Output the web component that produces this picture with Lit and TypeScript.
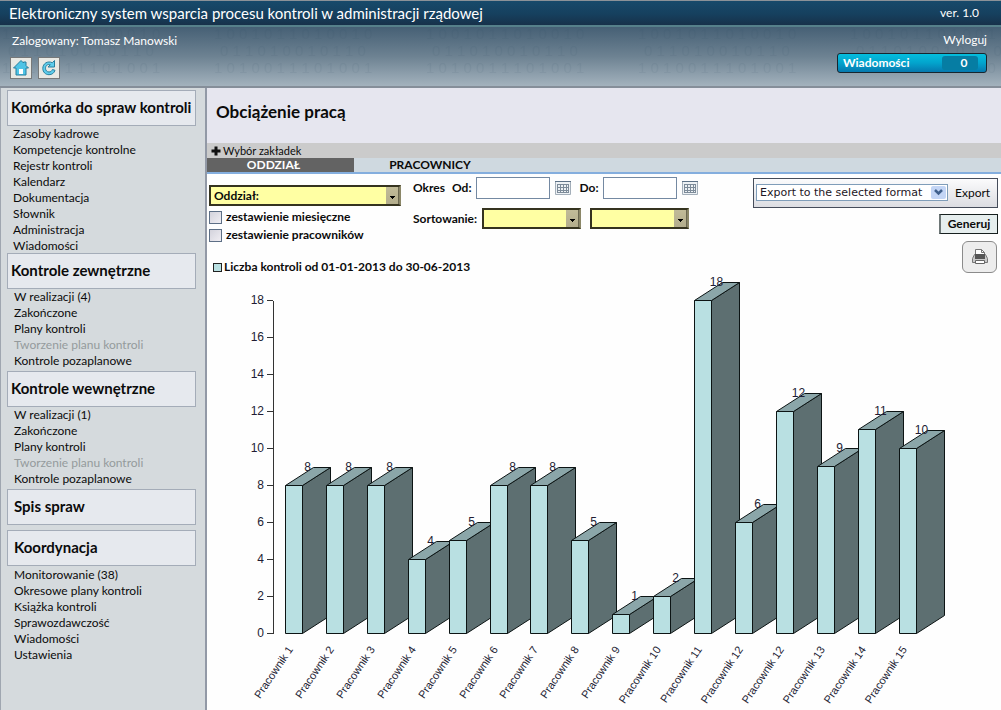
import { LitElement, html, svg, css } from "lit";
import { customElement, property } from "lit/decorators.js";
import { classMap } from "lit/directives/class-map.js";

interface MenuGroup {
  title: string;
  kind: string;
  items: { label: string; off?: boolean }[];
}

const audit = (n: number) => [
  { label: `W realizacji (${n})` },
  { label: "Zakończone" },
  { label: "Plany kontroli" },
  { label: "Tworzenie planu kontroli", off: true },
  { label: "Kontrole pozaplanowe" },
];

const MENU: MenuGroup[] = [
  {
    title: "Komórka do spraw kontroli",
    kind: "first",
    items: [
      "Zasoby kadrowe",
      "Kompetencje kontrolne",
      "Rejestr kontroli",
      "Kalendarz",
      "Dokumentacja",
      "Słownik",
      "Administracja",
      "Wiadomości",
    ].map((label) => ({ label })),
  },
  { title: "Kontrole zewnętrzne", kind: "audit", items: audit(4) },
  { title: "Kontrole wewnętrzne", kind: "audit", items: audit(1) },
  { title: "Spis spraw", kind: "single", items: [] },
  {
    title: "Koordynacja",
    kind: "last",
    items: [
      "Monitorowanie (38)",
      "Okresowe plany kontroli",
      "Książka kontroli",
      "Sprawozdawczość",
      "Wiadomości",
      "Ustawienia",
    ].map((label) => ({ label })),
  },
];

const LOAD: [string, number][] = [
  ["Pracownik 1", 8],
  ["Pracownik 2", 8],
  ["Pracownik 3", 8],
  ["Pracownik 4", 4],
  ["Pracownik 5", 5],
  ["Pracownik 6", 8],
  ["Pracownik 7", 8],
  ["Pracownik 8", 5],
  ["Pracownik 9", 1],
  ["Pracownik 10", 2],
  ["Pracownik 11", 18],
  ["Pracownik 12", 6],
  ["Pracownik 12", 12],
  ["Pracownik 13", 9],
  ["Pracownik 14", 11],
  ["Pracownik 15", 10],
];

@customElement("load-chart")
export class LoadChart extends LitElement {
  @property({ attribute: false }) data: [string, number][] = [];

  static styles = css`
    :host {
      display: block;
    }
    svg {
      display: block;
      width: 100%;
      height: auto;
      font: 12px "Liberation Sans", Arial, sans-serif;
      fill: #221c33;
    }
    .axis {
      stroke: #333;
      fill: none;
      shape-rendering: crispEdges;
    }
    .front,
    .side,
    .top {
      stroke: #0c1414;
      stroke-linejoin: round;
    }
    .front {
      fill: #b9e0e2;
    }
    .side {
      fill: #5d6f71;
    }
    .top {
      fill: #8ba6a9;
    }
    .end {
      text-anchor: end;
    }
    .mid {
      text-anchor: middle;
    }
    .name {
      font-size: 11px;
    }
  `;

  render() {
    const base = 360.5;
    const unit = 18.5;
    const ticks = [0, 2, 4, 6, 8, 10, 12, 14, 16, 18];
    const left = (i: number) => Math.round(i * 40.9) + 78.5;
    return html`<svg viewBox="0 0 794 437" role="img" aria-label="Liczba kontroli">
      <path class="axis" d="M66.5 27.5V360.5" />
      ${ticks.map((t) => {
        const y = Math.round(base - t * unit) - 0.5;
        return svg`<path class="axis" d="M60 ${y}H66" />
          <text class="end" x="57" y=${y + 3.5}>${t}</text>`;
      })}
      ${this.data.map(([, v], i) => {
        const x = left(i);
        const r = x + 17;
        const y = Math.round(base - v * unit) - 0.5;
        return svg`
          <path class="side" d="M${r} ${y}L${r + 28} ${y - 18}V${base - 18}L${r} ${base}Z" />
          <path class="top" d="M${x} ${y}L${x + 28} ${y - 18}H${r + 28}L${r} ${y}Z" />
          <path class="front" d="M${x} ${y}H${r}V${base}H${x}Z" />
          <text class="mid" x=${x + 22} y=${y - 14.5}>${v}</text>`;
      })}
      ${this.data.map(
        ([name], i) => svg`<text class="end name"
          transform="translate(${left(i) + 8} ${base + 16}) rotate(-56)">${name}</text>`
      )}
    </svg>`;
  }
}

@customElement("app-root")
export class AppRoot extends LitElement {
  static styles = css`
    :host {
      display: flex;
      flex-direction: column;
      min-height: 100vh;
      overflow: hidden;
      background: #fefefe;
      color: #0b0b0b;
      font: 12px/16px Lato, Carlito, sans-serif;
    }
    * {
      box-sizing: border-box;
    }
    button,
    input,
    select {
      font: inherit;
      color: inherit;
      margin: 0;
    }
    a {
      color: inherit;
      text-decoration: none;
    }
    h1,
    h2,
    ul {
      margin: 0;
      padding: 0;
      list-style: none;
    }
    .titlebar {
      display: flex;
      justify-content: space-between;
      align-items: center;
      height: 27px;
      padding: 0 22px 0 9px;
      border-top: 1px solid #8b9298;
      border-bottom: 2px solid #56808a;
      background: linear-gradient(#174a6b, #16405e 55%, #17314a);
      color: #fff;
      font-size: 12px;
    }
    .titlebar h1 {
      font-size: 15px;
      font-weight: 400;
    }
    .banner {
      position: relative;
      display: flex;
      justify-content: space-between;
      height: 61px;
      padding: 6px 14px 0 10px;
      border-bottom: 2px solid #858e99;
      background: linear-gradient(#466075, #6d8292 50%, #a3b2bd);
      color: #fff;
    }
    .binary {
      position: absolute;
      inset: 0;
      width: 100%;
      height: 100%;
      fill: #2c4a60;
      opacity: 0.07;
      font: 15px "Liberation Sans", sans-serif;
    }
    .user,
    .account {
      position: relative;
      display: flex;
      flex-direction: column;
    }
    .user {
      gap: 8px;
    }
    .user span {
      padding-left: 2px;
    }
    .account {
      align-items: flex-end;
      gap: 5px;
      margin-top: -1px;
    }
    .tools {
      display: flex;
      gap: 6px;
    }
    .tool {
      width: 22px;
      height: 22px;
      padding: 1px;
      border: 1px solid #77797a;
      background: #e9e9e4;
    }
    .tool svg {
      display: block;
    }
    .messages {
      display: flex;
      justify-content: space-between;
      align-items: center;
      width: 150px;
      height: 20px;
      padding: 0 8px 0 5px;
      border: 1px solid #17262f;
      border-radius: 3px;
      background: linear-gradient(#04bede, #03a3cc 50%, #0678ae);
      color: #fff;
      font-weight: 700;
    }
    .count {
      width: 36px;
      border-radius: 3px;
      line-height: 14px;
      padding-left: 8px;
      background: #067da3;
    }
    .body {
      flex: 1;
      display: grid;
      grid-template-columns: 207px minmax(0, 1fr);
    }
    nav {
      padding: 2px 9px 0 6px;
      border-left: 1px solid #9fa6b0;
      border-right: 2px solid #9299a6;
      background: #d5dadd;
    }
    .head {
      display: flex;
      align-items: center;
      height: 36px;
      padding: 0 0 2px 3px;
      border: 1px solid #a4acb8;
      background: #e6e9ee;
      font-size: 15px;
      font-weight: 700;
      white-space: nowrap;
    }
    .list {
      padding: 0 0 2px 7px;
    }
    .first .list {
      padding: 0 0 0 6px;
      margin-bottom: -1px;
    }
    .single {
      margin-bottom: 5px;
    }
    .single .head,
    .last .head {
      padding-left: 6px;
    }
    .last .list {
      padding-top: 1px;
    }
    .list .off {
      color: #949a9c;
    }
    .page-title {
      display: flex;
      align-items: center;
      height: 55px;
      padding: 0 9px 7px;
      background: #e6e6ef;
      font-size: 17px;
      font-weight: 700;
    }
    .choose {
      display: flex;
      align-items: center;
      gap: 2px;
      width: 100%;
      height: 15px;
      padding: 0 4px;
      border: 0;
      background: #cbcbcb;
      font-size: 11px;
    }
    .tabs {
      display: flex;
      height: 16px;
      border-bottom: 2px solid #84aede;
      background: #cfd9e0;
    }
    .tab {
      width: 147px;
      padding: 0 14px 0 0;
      border: 0;
      background: none;
      font-weight: 700;
      line-height: 14px;
    }
    .tab.on {
      background: #636363;
      color: #fff;
    }
    .tab.next {
      padding: 0 0 0 5px;
    }
    .filters {
      display: grid;
      grid-template-columns: 192px minmax(0, 1fr) auto;
      column-gap: 12px;
      padding: 2px 3px 0 2px;
      font-weight: 700;
    }
    .units {
      padding-top: 9px;
    }
    .pick {
      appearance: none;
      width: 100%;
      height: 21px;
      padding: 0 18px 0 3px;
      border: 2px solid #35331f;
      border-right-color: #8b8768;
      border-radius: 0;
      background: linear-gradient(#000, #000) right 4px top 9px / 5px 1px no-repeat,
        linear-gradient(#000, #000) right 5px top 10px / 3px 1px no-repeat,
        linear-gradient(#000, #000) right 6px top 11px / 1px 1px no-repeat,
        linear-gradient(#6b6750, #6b6750) right / 1px 100% no-repeat,
        linear-gradient(#c1bb98, #b3ad8c) right / 13px 100% no-repeat, #ffffa3;
      font-weight: 700;
    }
    .pick.short {
      width: 99px;
    }
    .check {
      display: flex;
      align-items: center;
      gap: 4px;
      height: 18px;
    }
    .units .pick {
      display: block;
      margin-bottom: 2px;
    }
    .check input {
      appearance: none;
      width: 13px;
      height: 13px;
      border: 1px solid #5d6f86;
      background: linear-gradient(135deg, #d3d3dc, #f0eef3);
    }
    .range,
    .sort {
      display: flex;
      align-items: center;
    }
    .range {
      height: 24px;
      gap: 4px;
    }
    .range .to {
      margin-left: 5px;
    }
    .sort {
      gap: 9px;
      margin-top: 8px;
    }
    .sort label {
      margin-right: -4px;
    }
    .period {
      margin-right: 3px;
    }
    .date {
      width: 74px;
      height: 22px;
      border: 1px solid #7489a2;
      background: #fff;
    }
    .cal {
      width: 16px;
      height: 16px;
      margin-left: 1px;
      padding: 0;
      border: 0;
      background: none;
    }
    .cal svg {
      display: block;
    }
    .actions {
      grid-column: 3;
      grid-row: 1 / 3;
      display: flex;
      flex-direction: column;
      align-items: flex-end;
      gap: 6px;
      padding-top: 2px;
      font-weight: 400;
    }
    .export {
      display: flex;
      align-items: center;
      gap: 7px;
      width: 245px;
      height: 30px;
      padding: 0 6px 1px 2px;
      border: 1px solid #454c5a;
      background: linear-gradient(#fbfbfc, #dcdde2);
    }
    .export select {
      appearance: none;
      width: 192px;
      height: 17px;
      padding: 0 0 0 3px;
      border: 1px solid #7f9db9;
      border-radius: 0;
      background: #fff;
      color: #1d1624;
      font: 11px/15px "DejaVu Sans", Verdana, sans-serif;
      grid-area: 1 / 1;
    }
    .format {
      display: grid;
      align-items: center;
    }
    .format svg {
      grid-area: 1 / 1;
      justify-self: end;
      margin-right: 2px;
      pointer-events: none;
    }
    .export button {
      padding: 0;
      border: 0;
      background: none;
    }
    .generate {
      width: 59px;
      height: 20px;
      padding: 0;
      border: 1px solid #17201f;
      border-left: 2px solid #6e7777;
      background: #e6eeee;
      font-weight: 700;
    }
    .print {
      display: grid;
      place-items: center;
      width: 35px;
      height: 32px;
      margin: 1px 1px 0 0;
      padding: 0;
      border: 1px solid #8b8b8b;
      border-radius: 6px;
      background: #ededed;
    }
    .legend {
      grid-column: 1 / 3;
      display: flex;
      align-items: center;
      align-self: end;
      gap: 2px;
      padding-left: 4px;
      margin-bottom: -2px;
    }
    .swatch {
      width: 9px;
      height: 9px;
      border: 1px solid #222;
      background: #b9e0e2;
    }
  `;

  private calendar(label: string) {
    return html`<button type="button" class="cal" aria-label=${label}>
      <svg width="16" height="16" viewBox="0 0 16 16">
        <path fill="#edf1f4" stroke="#a3aeb9" d="M.5 1.500h15v13H.5z" />
        <path fill="#5d7186" d="M0 1h16v1H0z" />
        <path
          fill="none"
          stroke="#7d8b99"
          shape-rendering="crispEdges"
          d="M2.500 4.500h11v8h-11zM5.500 4v9M8.500 4v9M11.500 4v9M2 7.500h12M2 10.500h12"
        />
      </svg>
    </button>`;
  }

  render() {
    return html`
      <header>
        <div class="titlebar">
          <h1>Elektroniczny system wsparcia procesu kontroli w administracji rządowej</h1>
          <span>ver. 1.0</span>
        </div>
        <div class="banner">
          <svg class="binary" aria-hidden="true">
            <defs>
              <pattern id="bits" width="212" height="60" patternUnits="userSpaceOnUse">
                <text x="2" y="12">1 0 0 1 0 1 1 0 1 0 0 1 0</text>
                <text x="8" y="29">0 1 1 0 1 0 0 1 0 1 1 0</text>
                <text x="2" y="46">1 0 1 0 0 1 1 1 0 1 0 0 1</text>
              </pattern>
            </defs>
            <rect width="100%" height="100%" fill="url(#bits)" />
          </svg>
          <div class="user">
            <span>Zalogowany: Tomasz Manowski</span>
            <div class="tools">
              <button class="tool" aria-label="Strona główna">
                <svg width="18" height="18" viewBox="0 0 18 18">
                  <path
                    d="M9 1.500 1.500 9H4v7h10V9h2.500L14 6.500V3h-2.500v1z"
                    fill="#4fc4e6"
                    stroke="#287f9e"
                  />
                  <path d="M7 10h4v5H7z" fill="#fff" />
                </svg>
              </button>
              <button class="tool" aria-label="Odśwież">
                <svg width="18" height="18" viewBox="0 0 18 18">
                  <path
                    d="M14.500 1.500V8H8l2.300-2.300C7.500 4.800 5.500 6.700 5.500 9.300c0 2.200 1.500 3.700 3.500 3.700 1.700 0 2.900-1 3.400-2.500l2.600.8C14.200 14 12 15.700 9 15.700c-3.600 0-6.200-2.700-6.200-6.300 0-4.900 4.900-7.900 9.500-5.700z"
                    fill="#5fcdec"
                    stroke="#287f9e"
                    stroke-linejoin="round"
                  />
                </svg>
              </button>
            </div>
          </div>
          <div class="account">
            <a href="#wyloguj">Wyloguj</a>
            <button class="messages">Wiadomości <span class="count">0</span></button>
          </div>
        </div>
      </header>
      <div class="body">
        <nav>
          ${MENU.map(
            (g) => html`<section class=${g.kind}>
              <h2 class="head">${g.title}</h2>
              ${g.items.length
                ? html`<ul class="list">
                    ${g.items.map(
                      (it) => html`<li>
                        <a href="#menu" class=${classMap({ off: !!it.off })}>${it.label}</a>
                      </li>`
                    )}
                  </ul>`
                : ""}
            </section>`
          )}
        </nav>
        <main>
          <h2 class="page-title">Obciążenie pracą</h2>
          <button class="choose">
            <svg width="10" height="10" viewBox="0 0 10 10">
              <path d="M5 .5v9M.5 5h9" stroke="#111" stroke-width="3" />
            </svg>
            Wybór zakładek
          </button>
          <div class="tabs">
            <button class="tab on">ODDZIAŁ</button>
            <button class="tab next">PRACOWNICY</button>
          </div>
          <form class="filters">
            <div class="units">
              <select class="pick" aria-label="Oddział">
                <option>Oddział:</option>
              </select>
              <label class="check"><input type="checkbox" />zestawienie miesięczne</label>
              <label class="check"><input type="checkbox" />zestawienie pracowników</label>
            </div>
            <div>
              <div class="range">
                <span class="period">Okres</span>
                <label for="from">Od:</label>
                <input class="date" id="from" type="text" />
                ${this.calendar("Data od")}
                <label for="to" class="to">Do:</label>
                <input class="date" id="to" type="text" />
                ${this.calendar("Data do")}
              </div>
              <div class="sort">
                <label for="sort">Sortowanie:</label>
                <select class="pick short" id="sort"></select>
                <select class="pick short" aria-label="Kierunek sortowania"></select>
              </div>
            </div>
            <div class="actions">
              <div class="export">
                <span class="format">
                  <select aria-label="Format">
                    <option>Export to the selected format</option>
                  </select>
                  <svg width="15" height="13" viewBox="0 0 15 13">
                    <rect width="15" height="13" rx="2" fill="#c3d5f5" />
                    <path d="M4 4l3.500 3.500L11 4" fill="none" stroke="#40608c" stroke-width="2.500" />
                  </svg>
                </span>
                <button type="button">Export</button>
              </div>
              <button type="button" class="generate">Generuj</button>
              <button type="button" class="print" aria-label="Drukuj">
                <svg width="18" height="18" viewBox="0 0 18 18">
                  <path d="M4.500 8V1.500h6l3 3V8" fill="#fff" stroke="#777" />
                  <path d="M10.500 1.500v3h3" fill="none" stroke="#777" />
                  <path d="M3.500 6.500h11l2 4v4h-15v-4z" fill="#c9c9c9" stroke="#777" />
                  <path d="M4 6h10v5H4z" fill="#555" />
                  <path d="M4.500 12.500h9v3h-9z" fill="#fff" stroke="#666" />
                </svg>
              </button>
            </div>
            <div class="legend"><span class="swatch"></span>Liczba kontroli od 01-01-2013 do 30-06-2013</div>
          </form>
          <load-chart .data=${LOAD}></load-chart>
        </main>
      </div>
    `;
  }
}
